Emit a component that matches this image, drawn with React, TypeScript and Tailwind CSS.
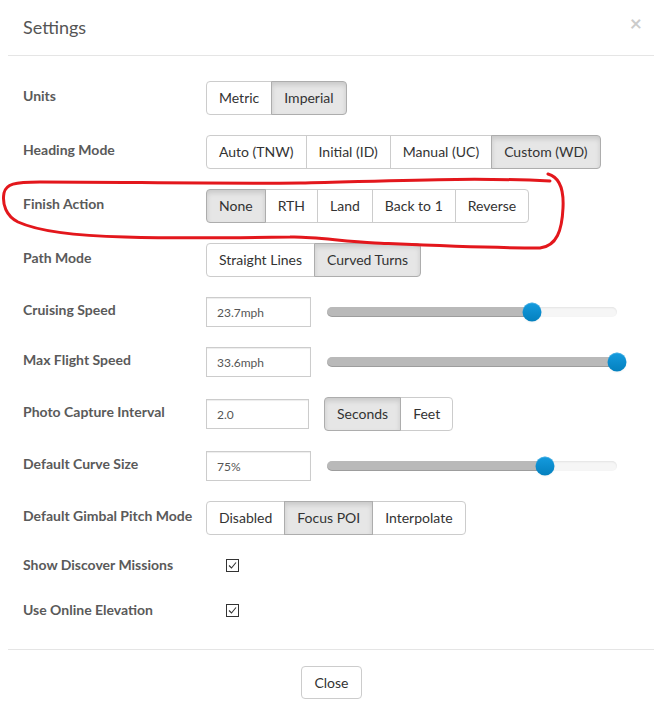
import clsx from 'clsx';

type SegProps = { options: string[]; active: string };

const Segmented = ({ options, active }: SegProps) => (
  <div className="inline-flex">
    {options.map((o, i) => (
      <button
        key={o}
        className={clsx(
          'h-[34px] px-3 text-[14px] leading-5 text-[#333] border whitespace-nowrap',
          i > 0 && '-ml-px',
          i === 0 && 'rounded-l-[4px]',
          i === options.length - 1 && 'rounded-r-[4px]',
          o === active
            ? 'relative bg-[#e6e6e6] border-[#adadad] shadow-[inset_0_3px_5px_rgba(0,0,0,0.125)]'
            : 'bg-white border-[#ccc]'
        )}
      >
        {o}
      </button>
    ))}
  </div>
);

const TextBox = ({ value, w = 'w-[105px]' }: { value: string; w?: string }) => (
  <input
    readOnly
    value={value}
    className={clsx(
      w,
      'h-[30px] px-[10px] text-[12px] text-[#555] border border-[#ccc] bg-white outline-none shadow-[inset_0_1px_1px_rgba(0,0,0,0.075)]'
    )}
  />
);

const Slider = ({ pct }: { pct: number }) => (
  <div className="relative ml-4 w-[290px] h-[10px] rounded-[5px] bg-[#f6f6f6] shadow-[inset_0_1px_2px_rgba(0,0,0,0.08)]">
    <div
      className="absolute left-0 top-0 h-full rounded-[5px] bg-[#b9b9b9] shadow-[inset_0_-1px_0_rgba(0,0,0,0.15)]"
      style={{ width: `${pct}%` }}
    />
    <div
      className="absolute top-1/2 -translate-y-1/2 -translate-x-1/2 w-[19px] h-[19px] rounded-full bg-gradient-to-b from-[#149bdf] to-[#0480be] shadow-[inset_0_1px_0_rgba(255,255,255,0.2),0_1px_2px_rgba(0,0,0,0.05)]"
      style={{ left: `${pct}%` }}
    />
  </div>
);

const Check = () => (
  <span className="ml-5 flex w-[13px] h-[13px] items-center justify-center border border-[#333] bg-white">
    <svg width="11" height="11" viewBox="0 0 11 11">
      <path d="M2 5.5 L4.5 8 L9 2.5" fill="none" stroke="#333" strokeWidth="1.1" />
    </svg>
  </span>
);

const Row = ({
  label,
  className,
  raised = true,
  children,
}: {
  label: string;
  className?: string;
  raised?: boolean;
  children?: React.ReactNode;
}) => (
  <div className={clsx('flex items-center', className)}>
    <label
      className={clsx(
        'w-[183px] shrink-0 text-[14px] font-bold text-[#5a5a5a] leading-5',
        raised && '-translate-y-[2px]'
      )}
    >
      {label}
    </label>
    {children}
  </div>
);

export default function App() {
  return (
    <div className="relative w-[654px] h-[713px] overflow-hidden bg-white font-['Lato',sans-serif]">
      <div className="ml-[8px] w-[647px]">
        {/* header */}
        <div className="flex h-[56px] items-center justify-between border-b border-[#e5e5e5] pl-[15px] pr-[13px] pb-px">
          <h4 className="text-[18px] text-[#555] leading-[26px]">Settings</h4>
          <span className="text-[21px] font-bold leading-none text-black opacity-20 -mt-[10px]">×</span>
        </div>

        {/* body */}
        <div className="px-[15px] pt-[25px] pb-[29px]">
          <Row label="Units" className="h-[34px]">
            <Segmented options={['Metric', 'Imperial']} active="Imperial" />
          </Row>
          <Row label="Heading Mode" className="h-[34px] mt-5">
            <Segmented options={['Auto (TNW)', 'Initial (ID)', 'Manual (UC)', 'Custom (WD)']} active="Custom (WD)" />
          </Row>
          <Row label="Finish Action" className="h-[34px] mt-5">
            <Segmented options={['None', 'RTH', 'Land', 'Back to 1', 'Reverse']} active="None" />
          </Row>
          <Row label="Path Mode" className="h-[34px] mt-5">
            <Segmented options={['Straight Lines', 'Curved Turns']} active="Curved Turns" />
          </Row>
          <Row label="Cruising Speed" className="h-[30px] mt-5">
            <TextBox value="23.7mph" />
            <Slider pct={70.7} />
          </Row>
          <Row label="Max Flight Speed" className="h-[30px] mt-5">
            <TextBox value="33.6mph" />
            <Slider pct={100} />
          </Row>
          <Row label="Photo Capture Interval" className="h-[34px] mt-5">
            <TextBox value="2.0" w="w-[103px]" />
            <div className="ml-[15px]">
              <Segmented options={['Seconds', 'Feet']} active="Seconds" />
            </div>
          </Row>
          <Row label="Default Curve Size" className="h-[30px] mt-5">
            <TextBox value="75%" />
            <Slider pct={75} />
          </Row>
          <Row label="Default Gimbal Pitch Mode" className="h-[34px] mt-5">
            <Segmented options={['Disabled', 'Focus POI', 'Interpolate']} active="Focus POI" />
          </Row>
          <Row label="Show Discover Missions" className="h-[20px] mt-5" raised={false}>
            <Check />
          </Row>
          <Row label="Use Online Elevation" className="h-[20px] mt-[25px]" raised={false}>
            <Check />
          </Row>
        </div>

        {/* footer */}
        <div className="flex justify-center border-t border-[#e5e5e5] pt-[16px]">
          <button className="h-[33px] px-3 text-[14px] text-[#333] border border-[#ccc] rounded-[4px] bg-white">
            Close
          </button>
        </div>
      </div>

      {/* hand-drawn red outline */}
      <svg className="pointer-events-none absolute left-0 top-0" width="654" height="713">
        <path
          d="M548 174 C559 177 564 189 563 208 C562 230 557 246 540 248 C480 248 420 245 375 243 C340 241 310 236 290 237 C230 238 160 238 125 237 C80 236 40 232 18 222 C6 216 2 204 4 193 C6 184 14 182 40 182 C120 182 220 184 300 183 C390 181 470 177 550 181"
          fill="none"
          stroke="#e3171c"
          strokeWidth="3"
          strokeLinecap="round"
          strokeLinejoin="round"
        />
      </svg>
    </div>
  );
}
